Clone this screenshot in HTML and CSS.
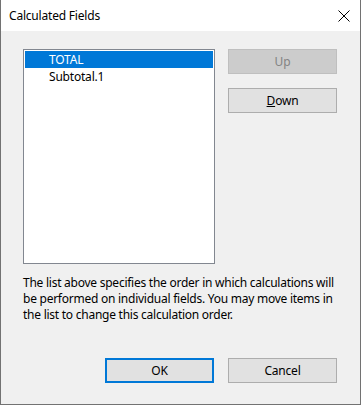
FILE: index.html
```html
<!DOCTYPE html>
<html>
<head>
<meta charset="utf-8">
<link rel="stylesheet" href="styles.css">
</head>
<body>
<div class="window">
  <div class="titlebar">
    <span class="title">Calculated Fields</span>
    <svg class="close" width="12" height="12" viewBox="0 0 12 12"><path d="M0.5 0.5 L11.5 11.5 M11.5 0.5 L0.5 11.5" stroke="#000" stroke-width="1" fill="none"/></svg>
  </div>
  <div class="content">
    <div class="top">
      <div class="list">
        <div class="item selected">TOTAL</div>
        <div class="item">Subtotal.1</div>
      </div>
      <div class="side">
        <div class="btn disabled">Up</div>
        <div class="btn"><span class="u">D</span>own</div>
      </div>
    </div>
    <p class="desc">The list above specifies the order in which calculations will be performed on individual fields. You may move items in the list to change this calculation order.</p>
    <div class="bottom">
      <div class="btn default">OK</div>
      <div class="btn">Cancel</div>
    </div>
  </div>
</div>
</body>
</html>
```
FILE: styles.css
```css
* { box-sizing: border-box; }
html, body { margin: 0; padding: 0; background: #f0f0f0; }
body { font-family: "Noto Sans", "Open Sans", sans-serif; font-size: 12px; color: #000; letter-spacing: -0.2px; }
.window {
  width: 361px; height: 405px;
  border: 1px solid #727272; border-top: none;
  display: flex; flex-direction: column;
}
.titlebar {
  height: 31px; background: #fff;
  display: flex; align-items: center; justify-content: space-between;
  padding: 0 10px 0 8px;
}
.title { font-size: 12px; }
.close { display: block; }
.content {
  flex: 1; background: #f0f0f0;
  display: flex; flex-direction: column;
  padding: 18px 23px 0 22px;
}
.top { display: flex; align-items: flex-start; }
.list {
  width: 192px; height: 215px;
  background: #fff; border: 1px solid #828790;
  padding: 1px;
}
.item { height: 17px; line-height: 17px; padding-left: 24px; }
.item.selected { background: #0078d7; color: #fff; }
.side { margin-left: 13px; display: flex; flex-direction: column; gap: 14px; }
.btn {
  width: 109px; height: 25px;
  background: #e1e1e1; border: 1px solid #adadad;
  display: flex; align-items: center; justify-content: center;
}
.btn.disabled { background: #cccccc; border-color: #bfbfbf; color: #838383; }
.btn.default { border: 2px solid #0078d7; }
.u { text-decoration: underline; }
.desc { margin: 11px -12px 0 0; line-height: 16px; letter-spacing: -0.25px; }
.bottom { display: flex; justify-content: flex-end; gap: 14px; margin-top: 35px; }
```
